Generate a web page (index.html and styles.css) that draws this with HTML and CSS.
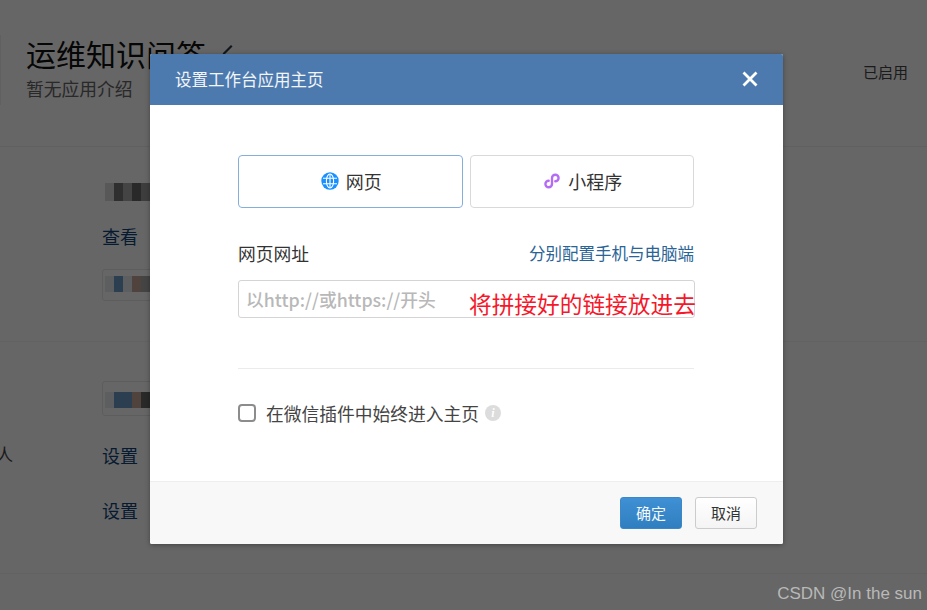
FILE: index.html
```html
<!DOCTYPE html>
<html lang="zh">
<head>
<meta charset="utf-8">
<title>设置工作台应用主页</title>
<link rel="stylesheet" href="styles.css">
</head>
<body>
<div class="page">
  <header class="app-head">
    <span class="app-rule"></span>
    <div class="app-info">
      <h1 class="app-name">运维知识问答 <svg class="pencil" width="16" height="16" viewBox="0 0 16 16"><path d="M3 14l1-3 8-8 1.500 1.500-8 8z" fill="#2b3a4a"/></svg></h1>
      <p class="app-desc">暂无应用介绍</p>
    </div>
    <span class="app-state">已启用</span>
  </header>
  <section class="sec sec-a">
    <div class="mosaic mosaic-a"><i class="m1"></i><i class="m2"></i><i class="m3"></i><i class="m4"></i><i class="m5"></i><i class="m4"></i></div>
    <a class="link link-view">查看</a>
    <div class="chip"><div class="mosaic"><i class="m9"></i><i class="m6"></i><i class="m9"></i><i class="m7"></i><i class="m8"></i></div></div>
  </section>
  <section class="sec sec-b">
    <div class="chip chip-b"><div class="mosaic"><i class="m9"></i><i class="m6"></i><i class="m6"></i><i class="m7"></i><i class="m4"></i></div></div>
    <div class="row row-first"><span class="row-label">人</span><a class="link">设置</a></div>
    <div class="row row-second"><span class="row-label"></span><a class="link">设置</a></div>
  </section>
</div>

<div class="mask"></div>

<div class="dialog">
  <div class="dialog-head">
    <span class="dialog-title">设置工作台应用主页</span>
    <svg class="close" width="18" height="18" viewBox="0 0 18 18"><path d="M2.5 2.5l13 13M15.500 2.500l-13 13" stroke="#fff" stroke-width="2.8" fill="none"/></svg>
  </div>
  <div class="dialog-body">
    <div class="tabs">
      <div class="tab tab-active">
        <svg width="18" height="18" viewBox="0 0 18 18"><circle cx="9" cy="9" r="8.700" fill="#1890ff"/><g fill="none" stroke="#fff" stroke-width="1.100"><ellipse cx="9" cy="9" rx="3.600" ry="7"/><path d="M2 6.300h14M2 11.700h14M9 2v14"/></g></svg>
        <span>网页</span>
      </div>
      <div class="tab">
        <svg width="18" height="18" viewBox="0 0 18 18"><path d="M9 6v6a3.300 3.300 0 1 1-3.300-3.300M9 12V6a3.300 3.300 0 1 1 3.300 3.300" fill="none" stroke="#b56cf5" stroke-width="2.400" stroke-linecap="round"/></svg>
        <span>小程序</span>
      </div>
    </div>
    <div class="field-head">
      <label class="field-label">网页网址</label>
      <a class="field-link">分别配置手机与电脑端</a>
    </div>
    <input class="url-input" type="text" placeholder="以http://或https://开头">
    <hr class="divider">
    <div class="check-row">
      <span class="check"></span>
      <span>在微信插件中始终进入主页</span>
      <span class="info">i</span>
    </div>
  </div>
  <div class="dialog-foot">
    <button class="btn btn-primary">确定</button>
    <button class="btn">取消</button>
  </div>
</div>

<div class="note">将拼接好的链接放进去</div>
<div class="watermark">CSDN @In the sun</div>
</body>
</html>
```
FILE: styles.css
```css
* { box-sizing: border-box; }
html, body { margin: 0; height: 100%; }
body {
  width: 927px;
  height: 610px;
  overflow: hidden;
  position: relative;
  background: #fff;
  font-family: "Noto Sans CJK SC", "Liberation Sans", sans-serif;
  color: #333;
}
.page { height: 610px; }

.app-head {
  height: 147px;
  padding: 35px 19px 0 0;
  border-bottom: 1px solid #f0f0f0;
  display: flex;
  align-items: flex-start;
}
.app-rule {
  width: 1px;
  height: 70px;
  margin-right: 25px;
  background: #f0f0f0;
}
.app-info { flex: 1; }
.app-name {
  margin: 0;
  font-size: 30px;
  line-height: 36px;
  font-weight: 400;
  color: #111;
  display: flex;
  align-items: center;
  gap: 4px;
}
.pencil { margin: -6px 0 0 9px; }
.app-desc { margin: 5px 0 0; font-size: 17.750px; line-height: 24px; color: #666; }
.app-state { margin-top: 27px; font-size: 15px; line-height: 20px; color: #444; }

.sec { padding-left: 102px; }
.sec-a { height: 195px; padding-top: 36px; border-bottom: 1px solid #f4f4f4; }
.sec-b { height: 232px; padding-top: 39px; border-bottom: 1px solid #f4f4f4; }

.mosaic { display: flex; }
.mosaic i { display: block; width: 9px; height: 16px; }
.mosaic-a { margin-left: 3px; }
.mosaic-a i { height: 18px; }
.m1 { background: #ddd; }
.m2 { background: #777; }
.m3 { background: #aaa; }
.m4 { background: #666; }
.m5 { background: #999; }
.m6 { background: #6f9dc8; }
.m7 { background: #c8a89a; }
.m8 { background: #aaa; }
.m9 { background: #e8ecf0; }

.link {
  display: block;
  font-size: 18px;
  line-height: 26px;
  color: #10457a;
}
.link-view { margin-top: 22px; }

.chip {
  width: 60px;
  height: 32px;
  margin-top: 20px;
  padding: 6px 0 0 2px;
  border: 1px solid #e8e8e8;
  border-radius: 3px;
}
.chip-b { height: 35px; margin-top: 0; padding-top: 10px; }

.row { display: flex; margin-left: -102px; }
.row-label {
  width: 102px;
  font-size: 17px;
  line-height: 24px;
  color: #444;
  text-indent: -4px;
}
.row-first { margin-top: 26px; }
.row-second { margin-top: 29px; }

.mask {
  position: absolute;
  inset: 0;
  background: rgba(0, 0, 0, .6);
}

.dialog {
  position: absolute;
  left: 150px;
  top: 54px;
  width: 633px;
  height: 490px;
  background: #fff;
  border-radius: 2px;
  box-shadow: 0 1px 5px rgba(0, 0, 0, .35);
  display: flex;
  flex-direction: column;
  overflow: hidden;
}
.dialog-head {
  height: 51px;
  flex: none;
  padding: 0 24px 0 25px;
  background: #4d7aae;
  color: #f2f5f9;
  display: flex;
  align-items: center;
  justify-content: space-between;
}
.dialog-title { font-size: 16.500px; line-height: 24px; margin-top: -1px; }
.close { margin-top: -1px; }

.dialog-body { flex: 1; padding: 50px 89px 0 88px; }
.tabs { display: flex; gap: 7px; }
.tab {
  flex: 1;
  height: 53px;
  padding: 0 0 2px 2px;
  border: 1px solid #d9d9d9;
  border-radius: 4px;
  display: flex;
  align-items: center;
  justify-content: center;
  gap: 7px;
  font-size: 18px;
  color: #333;
}
.tab-active { border-color: #86aedb; }

.field-head {
  margin-top: 33px;
  height: 26px;
  display: flex;
  justify-content: space-between;
  align-items: center;
}
.field-label { font-size: 17.750px; line-height: 26px; color: #333; margin-top: -2px; }
.field-link { font-size: 16.500px; line-height: 26px; color: #2a6496; margin-top: -2px; }

.url-input {
  display: block;
  width: 457px;
  height: 38px;
  margin-top: 13px;
  padding: 0 7px;
  border: 1px solid #d4d4d4;
  border-radius: 3px;
  outline: none;
  font-family: "Noto Sans CJK SC", "Liberation Sans", sans-serif;
  font-size: 17.800px;
  color: #333;
}
.url-input::placeholder { color: #b8b8b8; opacity: 1; font-weight: 500; }

.divider { margin: 50px 0 0; border: 0; border-top: 1px solid #ebebeb; }

.check-row {
  margin-top: 31px;
  height: 26px;
  display: flex;
  align-items: center;
  font-size: 17.750px;
  color: #444;
}
.check {
  width: 18px;
  height: 18px;
  margin-right: 10px;
  border: 2px solid #8c8c8c;
  border-radius: 4px;
}
.info {
  width: 16px;
  height: 16px;
  margin-left: 6px;
  border-radius: 50%;
  background: #dcdcdc;
  color: #fff;
  font: italic 700 12px/16px "Liberation Serif", serif;
  text-align: center;
}

.dialog-foot {
  height: 63px;
  flex: none;
  padding: 15px 26px 0 0;
  background: #f8f8f8;
  border-top: 1px solid #eee;
  display: flex;
  justify-content: flex-end;
  gap: 13px;
}
.btn {
  width: 62px;
  height: 32px;
  padding: 0 0 2px;
  border: 1px solid #ccc;
  border-radius: 3px;
  background: linear-gradient(#fff, #f4f4f4);
  font-family: "Noto Sans CJK SC", "Liberation Sans", sans-serif;
  font-size: 15px;
  color: #333;
}
.btn-primary {
  border-color: #3c87c6;
  background: linear-gradient(#3f90d4, #2f7fc0);
  color: #f4f8fc;
}

.note {
  position: absolute;
  left: 469px;
  top: 287px;
  font-size: 22.700px;
  line-height: 34px;
  color: #f5182a;
  white-space: nowrap;
}
.watermark {
  position: absolute;
  right: 5px;
  top: 584px;
  font-family: "Liberation Sans", sans-serif;
  font-size: 17px;
  line-height: 20px;
  color: #b9b9b9;
}
```
